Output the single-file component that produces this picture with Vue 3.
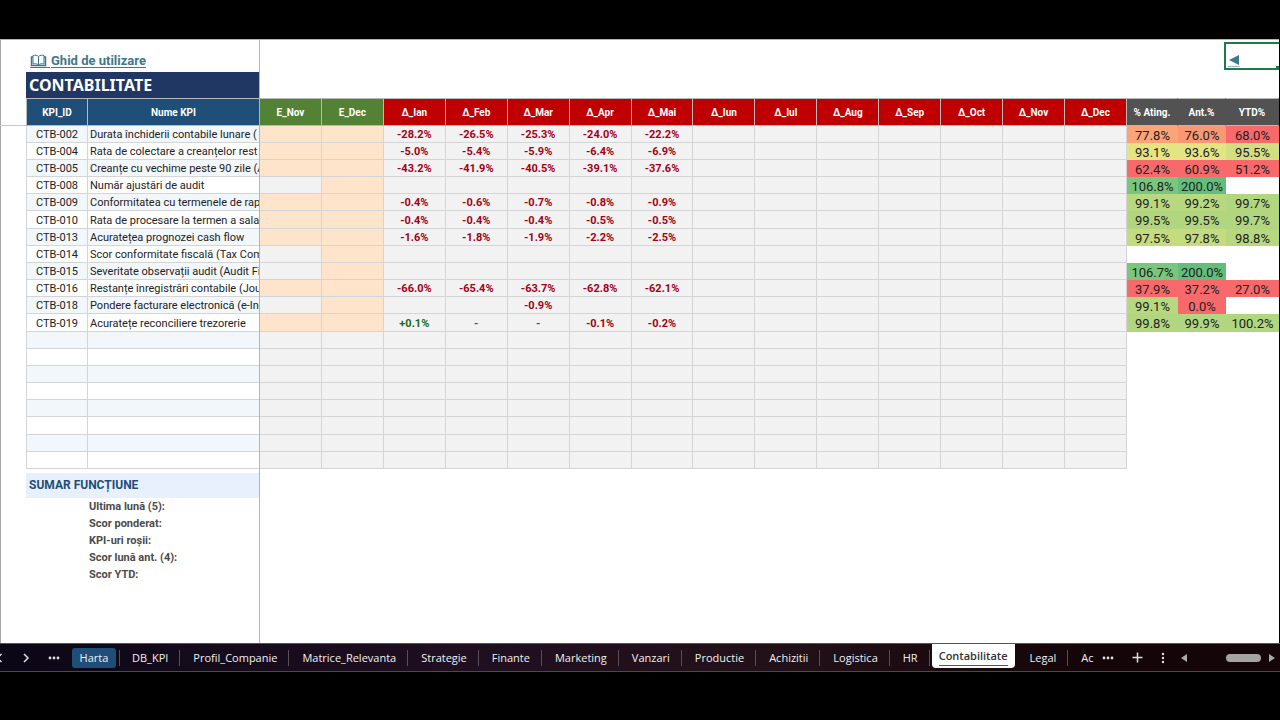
<script setup>
const months = ['Ian', 'Feb', 'Mar', 'Apr', 'Mai', 'Iun', 'Iul', 'Aug', 'Sep', 'Oct', 'Nov', 'Dec']

const rows = [
  { id: 'CTB-002', name: 'Durata închiderii contabile lunare (', est: [1, 1], delta: ['-28.2%', '-26.5%', '-25.3%', '-24.0%', '-22.2%'], score: [['77.8%', 'orange'], ['76.0%', 'salmon'], ['68.0%', 'red']] },
  { id: 'CTB-004', name: 'Rata de colectare a creanțelor rest', est: [1, 1], delta: ['-5.0%', '-5.4%', '-5.9%', '-6.4%', '-6.9%'], score: [['93.1%', 'yellow'], ['93.6%', 'yellow'], ['95.5%', 'olive']] },
  { id: 'CTB-005', name: 'Creanțe cu vechime peste 90 zile (A', est: [1, 1], delta: ['-43.2%', '-41.9%', '-40.5%', '-39.1%', '-37.6%'], score: [['62.4%', 'red'], ['60.9%', 'red'], ['51.2%', 'red']] },
  { id: 'CTB-008', name: 'Număr ajustări de audit', est: [0, 1], delta: [], score: [['106.8%', 'green'], ['200.0%', 'deep'], null] },
  { id: 'CTB-009', name: 'Conformitatea cu termenele de rap', est: [1, 1], delta: ['-0.4%', '-0.6%', '-0.7%', '-0.8%', '-0.9%'], score: [['99.1%', 'lime'], ['99.2%', 'lime'], ['99.7%', 'leaf']] },
  { id: 'CTB-010', name: 'Rata de procesare la termen a sala', est: [1, 1], delta: ['-0.4%', '-0.4%', '-0.4%', '-0.5%', '-0.5%'], score: [['99.5%', 'leaf'], ['99.5%', 'leaf'], ['99.7%', 'leaf']] },
  { id: 'CTB-013', name: 'Acuratețea prognozei cash flow', est: [1, 1], delta: ['-1.6%', '-1.8%', '-1.9%', '-2.2%', '-2.5%'], score: [['97.5%', 'moss'], ['97.8%', 'moss'], ['98.8%', 'lime']] },
  { id: 'CTB-014', name: 'Scor conformitate fiscală (Tax Com', est: [0, 1], delta: [], score: [null, null, null] },
  { id: 'CTB-015', name: 'Severitate observații audit (Audit Fi', est: [0, 1], delta: [], score: [['106.7%', 'green'], ['200.0%', 'deep'], null] },
  { id: 'CTB-016', name: 'Restanțe înregistrări contabile (Jou', est: [1, 1], delta: ['-66.0%', '-65.4%', '-63.7%', '-62.8%', '-62.1%'], score: [['37.9%', 'red'], ['37.2%', 'red'], ['27.0%', 'red']] },
  { id: 'CTB-018', name: 'Pondere facturare electronică (e-In', est: [0, 1], delta: ['', '', '-0.9%'], score: [['99.1%', 'lime'], ['0.0%', 'red'], null] },
  { id: 'CTB-019', name: 'Acuratețe reconciliere trezorerie', est: [1, 1], delta: ['+0.1%', '-', '-', '-0.1%', '-0.2%'], score: [['99.8%', 'leaf'], ['99.9%', 'leaf'], ['100.2%', 'leaf']] },
  ...Array.from({ length: 8 }, () => ({ id: '', name: '', est: [0, 0], delta: [], score: [null, null, null] }))
]

const summary = ['Ultima lună (5):', 'Scor ponderat:', 'KPI-uri roșii:', 'Scor lună ant. (4):', 'Scor YTD:']

const tabs = ['Harta', 'DB_KPI', 'Profil_Companie', 'Matrice_Relevanta', 'Strategie', 'Finante', 'Marketing', 'Vanzari', 'Productie', 'Achizitii', 'Logistica', 'HR', 'Contabilitate', 'Legal', 'Ac']

const tone = (v) => (!v ? '' : v[0] === '+' || v === '-' ? 'up' : 'down')
</script>

<template>
  <div class="screen">
    <main class="sheet">
      <div class="toprow">
        <a class="guide" href="#">
          <svg width="20" height="14" viewBox="0 0 20 14" fill="none" stroke="currentColor" stroke-width="1">
            <path d="M8.500 2.500C7 1 5 1 3 1.500v8.500c2-.5 4-.5 5.500 1c1.500-1.500 3.500-1.500 5.500-1V1.500C12 1 10 1 8.500 2.500zM8.500 2.500V11" />
            <path d="M3 3H1.500v8.500H15.500V3H14" stroke-width="1.500" />
            <path d="M0 13.500H20" />
          </svg>
          <span>Ghid de utilizare</span>
        </a>
        <a class="back" href="#" aria-label="Înapoi">
          <svg width="12" height="14" viewBox="0 0 12 14"><path d="M11 1V11L1 6z" fill="#3f7889" /><path d="M0 12.500H11.500" stroke="#8fb6cc" /></svg>
          <i class="handle"></i>
        </a>
      </div>

      <h1>CONTABILITATE</h1>

      <div class="grid">
        <table>
          <colgroup>
            <col class="c-id" /><col class="c-name" />
            <col v-for="n in 14" :key="n" />
            <col class="c-a" /><col class="c-b" /><col class="c-c" />
          </colgroup>
          <thead>
            <tr>
              <th class="blue first">KPI_ID</th>
              <th class="blue">Nume KPI</th>
              <th class="olivehead">E_Nov</th>
              <th class="olivehead">E_Dec</th>
              <th v-for="m in months" :key="m" class="redhead">Δ_{{ m }}</th>
              <th class="gray">% Ating.</th>
              <th class="gray">Ant.%</th>
              <th class="gray">YTD%</th>
            </tr>
          </thead>
          <tbody>
            <tr v-for="(r, i) in rows" :key="i">
              <td class="id first">{{ r.id }}</td>
              <td class="name">{{ r.name }}</td>
              <td v-for="(e, k) in r.est" :key="'e' + k" class="cell" :class="{ peach: e }"></td>
              <td v-for="(m, k) in months" :key="m" class="cell" :class="tone(r.delta[k])">{{ r.delta[k] }}</td>
              <td v-for="(s, k) in r.score" :key="'s' + k" class="score" :class="s && s[1]">{{ s && s[0] }}</td>
            </tr>
          </tbody>
        </table>
      </div>

      <section class="summary">
        <h2>SUMAR FUNCȚIUNE</h2>
        <p v-for="s in summary" :key="s">{{ s }}</p>
      </section>
    </main>

    <nav class="tabbar">
      <div class="arrows">
        <button aria-label="Foile anterioare"><svg width="8" height="10" viewBox="0 0 8 10"><path d="M5.500 1L1.500 5l4 4" /></svg></button>
        <button aria-label="Foile următoare"><svg width="8" height="10" viewBox="0 0 8 10"><path d="M2 1l4 4-4 4" /></svg></button>
        <button aria-label="Toate foile"><svg class="solid" width="12" height="4" viewBox="0 0 12 4"><circle cx="2" cy="2" r="1.400" /><circle cx="6" cy="2" r="1.400" /><circle cx="10" cy="2" r="1.400" /></svg></button>
      </div>
      <div class="tabs">
        <button v-for="t in tabs" :key="t" :class="{ home: t === 'Harta', active: t === 'Contabilitate' }"><span>{{ t }}</span></button>
      </div>
      <div class="tools">
        <button aria-label="Mai multe foi"><svg class="solid" width="12" height="4" viewBox="0 0 12 4"><circle cx="2" cy="2" r="1.400" /><circle cx="6" cy="2" r="1.400" /><circle cx="10" cy="2" r="1.400" /></svg></button>
        <button aria-label="Foaie nouă"><svg width="11" height="11" viewBox="0 0 11 11"><path d="M5.500 .5v10M.5 5.500h10" /></svg></button>
        <button aria-label="Opțiuni"><svg class="solid" width="4" height="12" viewBox="0 0 4 12"><circle cx="2" cy="2" r="1.200" /><circle cx="2" cy="6" r="1.200" /><circle cx="2" cy="10" r="1.200" /></svg></button>
      </div>
      <div class="scroll">
        <button aria-label="Derulare la stânga"><svg class="solid" width="6" height="8" viewBox="0 0 6 8"><path d="M6 0v8L0 4z" /></svg></button>
        <i class="thumb"></i>
        <button aria-label="Derulare la dreapta"><svg class="solid" width="6" height="8" viewBox="0 0 6 8"><path d="M0 0v8l6-4z" /></svg></button>
      </div>
    </nav>
  </div>
</template>

<style>
body { background: #000; }
</style>

<style scoped>
* { box-sizing: border-box; }
.screen {
  min-height: 100vh;
  padding: 39px 0 48px;
  display: flex;
  flex-direction: column;
  background: #000;
  font-family: Roboto, "Noto Sans", sans-serif;
  color: #222;
}
.sheet {
  position: relative;
  flex: 1;
  margin-right: 1px;
  padding-left: 25px;
  background: #fff;
  border-top: 1px solid #b4b4b4;
  border-left: 1px solid #a6a6a6;
}
.sheet::after {
  content: "";
  position: absolute;
  top: 0;
  bottom: 0;
  left: 258px;
  width: 1px;
  background: #b5b5b5;
}
.toprow {
  height: 32px;
  display: flex;
  justify-content: space-between;
}
.guide {
  display: flex;
  align-items: flex-end;
  height: 29px;
  padding-left: 4px;
  color: #3f7889;
  font-size: 13px;
  font-weight: 700;
  line-height: 16px;
  text-underline-offset: 2px;
}
.guide svg { margin-bottom: 1px; }
.guide span { padding-left: 1px; }
.back {
  position: relative;
  width: 55px;
  height: 28px;
  margin-top: 2px;
  padding: 10px 0 0 2px;
  border: 2px solid #1d7a49;
  border-right: 0;
}
.back svg { display: block; }
.handle {
  position: absolute;
  right: 0;
  bottom: -2px;
  width: 3px;
  height: 4px;
  background: #1d7a49;
}
h1 {
  width: 233px;
  height: 26px;
  margin: 0;
  padding-left: 3px;
  background: #203764;
  color: #fff;
  font: 700 16px/27px "Noto Sans", sans-serif;
}
table {
  width: 100%;
  table-layout: fixed;
  border-collapse: separate;
  border-spacing: 0;
}
.grid { margin-left: -26px; padding-left: 26px; background: linear-gradient(#c8c8c8, #c8c8c8) 0 27px / 26px 1px no-repeat; }
.c-id { width: 62px; }
.c-name { width: 172px; }
.c-a { width: 51px; }
.c-b { width: 48px; }
.c-c { width: 53px; }
th {
  height: 28px;
  padding: 0;
  border: solid #b9b9b9;
  border-width: 1px 1px 1px 0;
  color: #fff;
  font-size: 10px;
  font-weight: 700;
}
.blue { background: #1f4e79; }
.olivehead { background: #548235; }
.redhead { background: #c00000; }
.gray { background: #525252; border-right-color: #525252; }
td {
  height: 17px;
  padding: 2px 0 0;
  border: solid #d3d5d7;
  border-width: 0 1px 1px 0;
  font-size: 11px;
  line-height: 14px;
  text-align: center;
  white-space: nowrap;
  overflow: hidden;
}
tr:nth-child(6n) td { height: 18px; }
.first { border-left-width: 1px; }
tr:nth-child(odd) .id, tr:nth-child(odd) .name { background: #f2f7fc; }
.name { padding-left: 2px; border-right: 0; text-align: left; }
.cell { background: #f2f2f2; font-weight: 700; }
.peach { background: #fee4ca; }
.down { color: #a50016; }
.up { color: #1a6b1a; }
.score { border: 0; font-size: 13px; }
.orange { background: #fca377; }
.salmon { background: #fb9874; }
.red { background: #f8696b; }
.yellow { background: #e5e483; }
.olive { background: #d2df81; }
.green { background: #7bc67d; }
.deep { background: #63be7b; }
.lime { background: #b7d87f; }
.leaf { background: #b1d67f; }
.moss { background: #c4db80; }
.summary { padding-top: 4px; }
h2 {
  width: 233px;
  height: 25px;
  margin: 0;
  padding-left: 3px;
  background: #e8effd;
  color: #1f4e79;
  font-size: 12px;
  font-weight: 700;
  line-height: 25px;
}
p {
  margin: 0;
  padding-left: 63px;
  color: #4b4b4b;
  font-size: 11px;
  font-weight: 700;
  line-height: 17px;
}
.tabbar {
  height: 29px;
  display: flex;
  background: linear-gradient(90deg, #0b0716, #1f0f20 35%, #231119 60%, #140608 85%);
  border-top: 1px solid #555;
  border-bottom: 1px solid #4a4a4a;
  overflow: hidden;
}
button {
  padding: 0;
  border: 0;
  background: none;
  color: #f0f0f0;
  font: 11px "Open Sans", "Noto Sans", sans-serif;
  display: flex;
  align-items: center;
  justify-content: center;
}
svg { flex: none; }
button svg { fill: none; stroke: #e0e0e0; stroke-width: 1.5; }
button svg.solid { fill: #e0e0e0; stroke: none; }
.arrows { width: 76px; display: flex; justify-content: space-between; padding-right: 12px; margin-left: -4px; flex: none; }
.tabs { flex: 1; min-width: 0; display: flex; overflow: hidden; }
.tabs button {
  flex: none;
  padding: 0 12px;
  border-right: 1px solid transparent;
  background: linear-gradient(#55505a, #55505a) 100% 50% / 1px 16px no-repeat;
}
.tabs .home { width: 48px; padding: 0 4px 0 0; border: 0; }
.tabs .home span { width: 44px; border-radius: 3px; background: #1f4e79; line-height: 20px; text-align: center; }
.tabs .active { margin: 0 3px 0 1px; padding: 0 7px; border: 0; border-radius: 0 0 4px 4px; background: #fff; color: #333; height: 24px; font-weight: 600; }
.tabs .active span { border-bottom: 1px solid #12823f; line-height: 18px; }
.tabs button:last-child { padding-right: 0; background: none; }
.tools { width: 78px; flex: none; display: flex; justify-content: space-between; padding: 0 11px 0 4px; }
.scroll { width: 104px; flex: none; display: flex; align-items: center; padding: 0 5px; }
.thumb { width: 35px; height: 8px; margin: 0 8px 0 auto; border-radius: 4px; background: #a3a3a3; }
.scroll button svg.solid { fill: #aaa; }
</style>
